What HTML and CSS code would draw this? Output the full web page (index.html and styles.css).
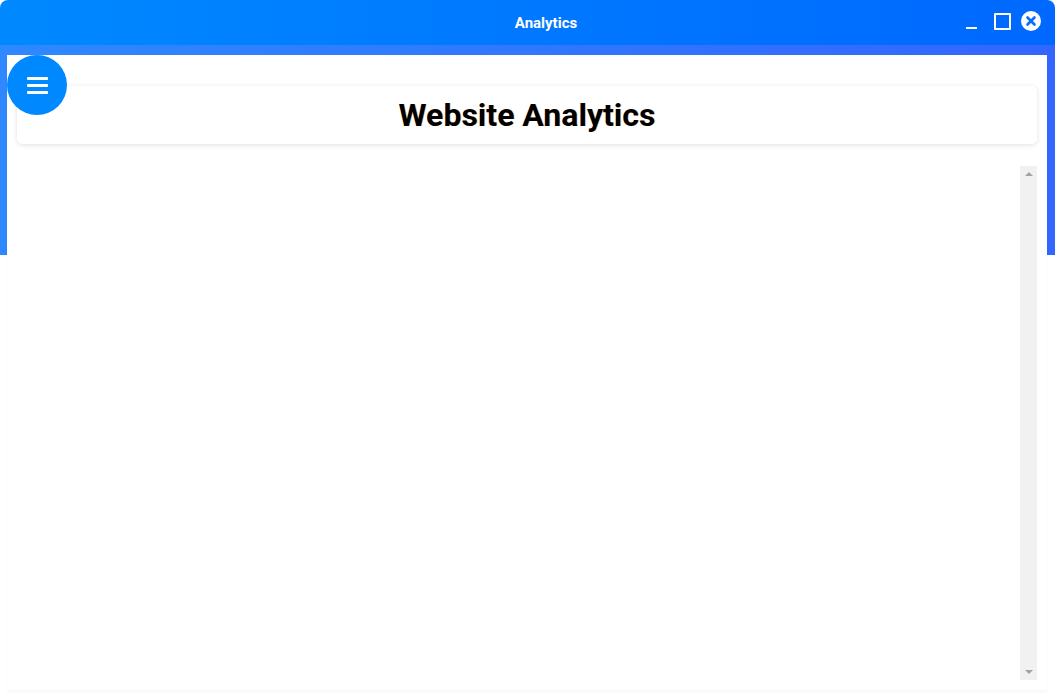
FILE: index.html
```html
<!DOCTYPE html>
<html>
<head>
<title>Analytics</title>
<meta charset="utf-8">
<link rel="stylesheet" href="styles.css">
</head>
<body>
	<div class="ventana">
		<div class="barra-titulo">
			<div class="titulo">Analytics</div>
			<div class="controles">
				<span class="minimizar"></span>
				<span class="maximizar"></span>
				<span class="cerrar">
					<svg width="20" height="20" viewBox="0 0 20 20">
						<circle cx="10" cy="10" r="10" fill="#fff"/>
						<path d="M6.5 6.5 L13.5 13.5 M13.5 6.5 L6.5 13.5" stroke="#0a6cff" stroke-width="2.6" stroke-linecap="round"/>
					</svg>
				</span>
			</div>
		</div>
		<div class="marco">
			<div class="contenido">
				<button class="menu" title="Menu">
					<span></span><span></span><span></span>
				</button>
				<div class="cabecera">
					<h1>Website Analytics</h1>
				</div>
				<div class="graficas">
					<div class="area"></div>
					<div class="scroll">
						<span class="flecha arriba"></span>
						<span class="flecha abajo"></span>
					</div>
				</div>
			</div>
		</div>
	</div>
</body>
</html>
```

FILE: styles.css
```css
html, body {
	margin: 0;
	padding: 0;
	background-color: #fff;
	font-family: "Roboto", "Liberation Sans", sans-serif;
}
.ventana {
	width: 1055px;
	height: 696px;
	overflow: hidden;
	background-color: #fff;
}
.barra-titulo {
	height: 45px;
	display: flex;
	align-items: center;
	background: linear-gradient(90deg, #0089ff, #0068ff);
	border-radius: 8px 8px 0 0;
	color: #fff;
}
.titulo {
	flex-grow: 1;
	text-align: center;
	padding-left: 152px;
	font-size: 15px;
	font-weight: bold;
}
.controles {
	width: 106px;
	height: 45px;
	margin-right: 9px;
	position: relative;
}
.minimizar {
	position: absolute;
	left: 26px;
	top: 27px;
	width: 11px;
	height: 2px;
	background-color: #fff;
}
.maximizar {
	position: absolute;
	left: 54px;
	top: 13px;
	width: 13px;
	height: 13px;
	border: 2px solid #fff;
	border-radius: 1px;
}
.cerrar {
	position: absolute;
	left: 81px;
	top: 11px;
	width: 20px;
	height: 20px;
}
.cerrar svg {
	display: block;
}
.marco {
	height: 651px;
	padding: 10px 8px 0 7px;
	box-sizing: border-box;
	background: linear-gradient(90deg, #2f88ff, #3366ff) no-repeat;
	background-size: 100% 210px;
}
.contenido {
	position: relative;
	background-color: #fff;
	height: 635px;
	padding: 31px 10px 0 10px;
	box-sizing: border-box;
	box-shadow: 0 2px 3px rgba(0,0,0,0.03);
}
.menu {
	position: absolute;
	left: 0;
	top: 0;
	width: 60px;
	height: 60px;
	border: none;
	border-radius: 50%;
	background-color: #0088ff;
	display: flex;
	flex-direction: column;
	align-items: center;
	justify-content: center;
	gap: 4px;
	padding: 0;
	z-index: 2;
}
.menu span {
	display: block;
	width: 21px;
	height: 3px;
	border-radius: 1px;
	background-color: #fff;
}
.cabecera {
	height: 58px;
	background-color: #fff;
	border-radius: 5px;
	box-shadow: 0 1px 5px rgba(0,0,0,0.12);
	display: flex;
	align-items: center;
	justify-content: center;
}
.cabecera h1 {
	margin: 0;
	font-size: 32px;
	font-weight: bold;
	color: #000;
	text-shadow: 1px 0 0 rgba(255,140,0,0.35);
}
.graficas {
	margin-top: 22px;
	height: 514px;
	display: flex;
}
.area {
	flex-grow: 1;
}
.scroll {
	width: 17px;
	background-color: #f1f1f1;
	display: flex;
	flex-direction: column;
	justify-content: space-between;
	align-items: center;
	padding: 6px 0;
	box-sizing: border-box;
}
.flecha {
	width: 0;
	height: 0;
	border-left: 4px solid transparent;
	border-right: 4px solid transparent;
}
.arriba {
	border-bottom: 4px solid #a3a3a3;
}
.abajo {
	border-top: 4px solid #a3a3a3;
}
```
